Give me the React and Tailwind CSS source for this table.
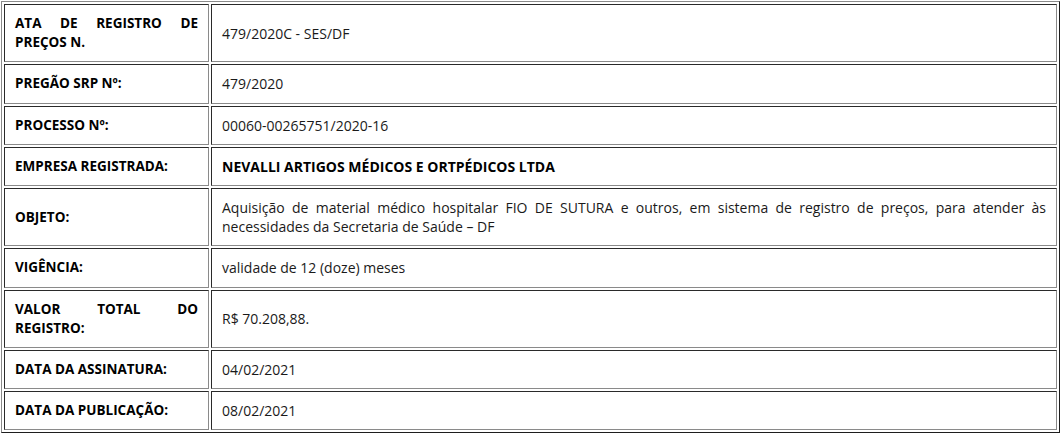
const rows = [
  { label: "ATA DE REGISTRO DE PREÇOS N.", value: "479/2020C - SES/DF" },
  { label: "PREGÃO SRP Nº:", value: "479/2020" },
  { label: "PROCESSO Nº:", value: "00060-00265751/2020-16" },
  { label: "EMPRESA REGISTRADA:", value: "NEVALLI ARTIGOS MÉDICOS E ORTPÉDICOS LTDA", bold: true },
  {
    label: "OBJETO:",
    value:
      "Aquisição de material médico hospitalar FIO DE SUTURA e outros, em sistema de registro de preços, para atender às necessidades da Secretaria de Saúde – DF",
  },
  { label: "VIGÊNCIA:", value: "validade de 12 (doze) meses" },
  { label: "VALOR TOTAL DO REGISTRO:", value: "R$ 70.208,88." },
  { label: "DATA DA ASSINATURA:", value: "04/02/2021" },
  { label: "DATA DA PUBLICAÇÃO:", value: "08/02/2021" },
];

const cell =
  "border border-t-[#2a2a2a] border-l-[#2a2a2a] border-r-[#8a8a8a] border-b-[#8a8a8a] px-[10px] py-[9px] align-middle text-justify";

export default function App() {
  return (
    <div className="bg-white pl-px pt-px font-['Open_Sans','Liberation_Sans',sans-serif] leading-[19.2px] text-[#1a1a1a]">
      <table className="w-[1059px] border-separate border-spacing-[2px] border border-t-[#8a8a8a] border-l-[#8a8a8a] border-r-[#1e1e1e] border-b-[#1e1e1e]">
        <colgroup>
          <col className="w-[205px]" />
          <col />
        </colgroup>
        <tbody>
          {rows.map((row) => (
            <tr key={row.label}>
              <td className={`${cell} text-[13.5px] font-bold text-black`}>{row.label}</td>
              <td className={`${cell} text-[14px] ${row.bold ? "font-bold text-black" : ""}`}>{row.value}</td>
            </tr>
          ))}
        </tbody>
      </table>
    </div>
  );
}
